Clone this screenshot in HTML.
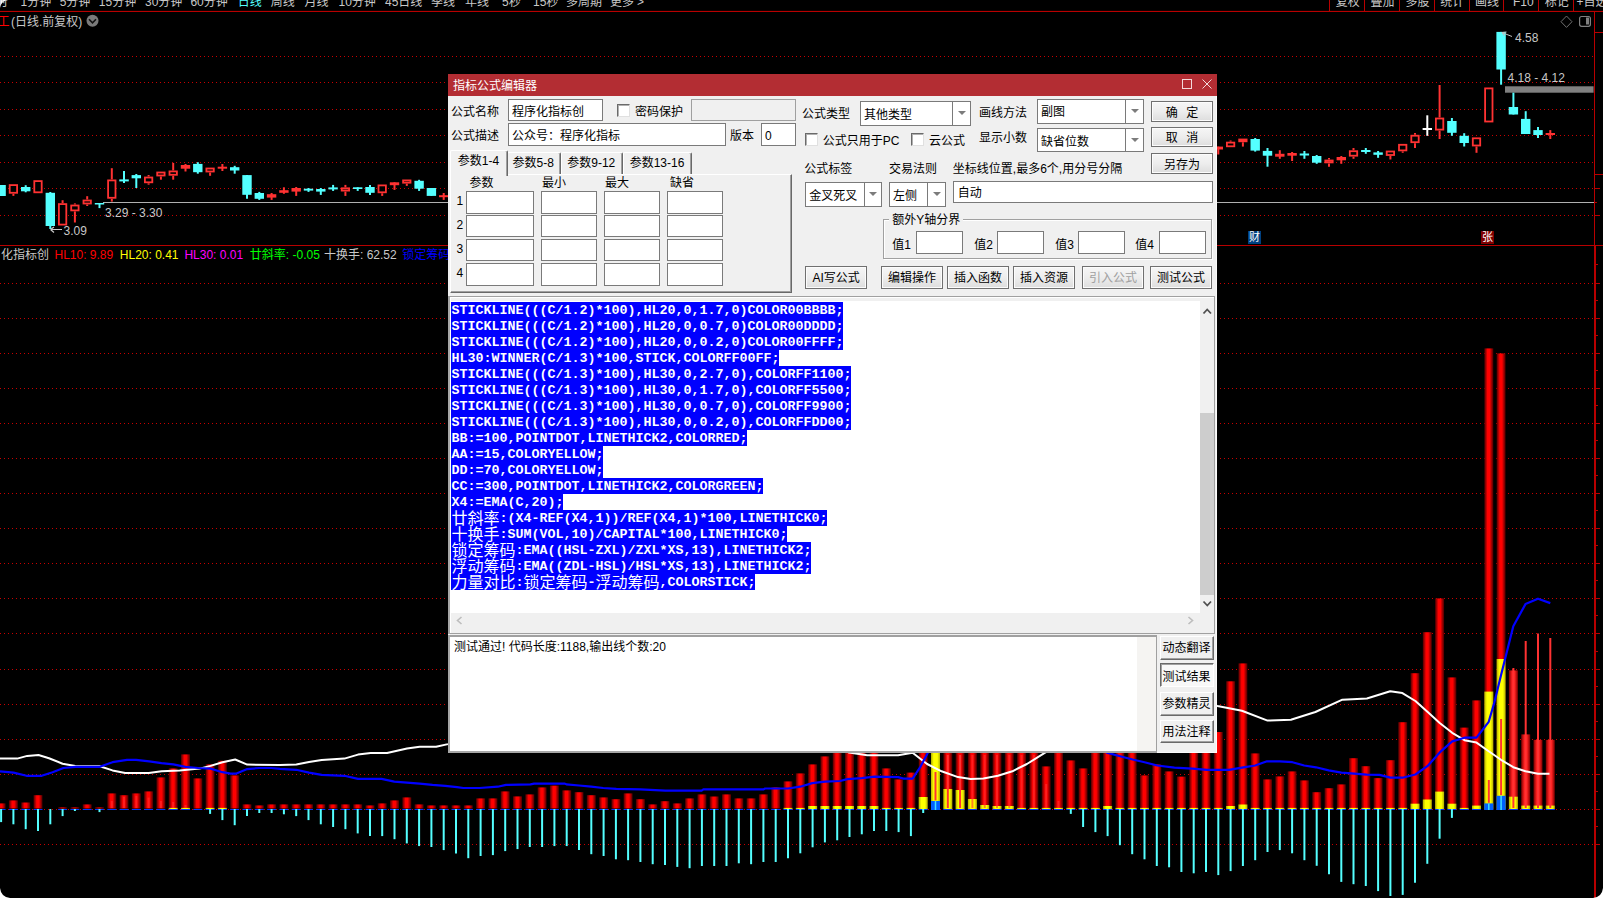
<!DOCTYPE html>
<html lang="zh"><head><meta charset="utf-8"><title>指标公式编辑器</title>
<style>
html,body{margin:0;padding:0;background:#000;}
body{width:1603px;height:898px;overflow:hidden;position:relative;font-family:"Liberation Sans","Noto Sans CJK SC",sans-serif;font-size:12px;color:#000;}
.t{position:absolute;white-space:nowrap;line-height:16px;height:16px;}
.ct{color:#c8c8c8;}
.b{position:absolute;box-sizing:border-box;}
.inp{position:absolute;box-sizing:border-box;background:#fff;border:1px solid #7a7a7a;}
.btn{position:absolute;box-sizing:border-box;border:1px solid #707070;background:linear-gradient(#f6f6f6 0%,#ededed 50%,#dddddd 100%);box-shadow:inset 0 0 0 1px #fcfcfc;}
.bt{position:absolute;white-space:nowrap;line-height:16px;height:16px;text-align:center;}
.cb{position:absolute;box-sizing:border-box;width:13px;height:13px;background:#fff;border:1px solid #6a6a6a;border-right-color:#e0e0e0;border-bottom-color:#e0e0e0;box-shadow:inset 1px 1px 0 #b0b0b0;}
.combo{position:absolute;box-sizing:border-box;background:#fff;border:1px solid #7a7a7a;}
.combo i{position:absolute;top:0;bottom:0;width:1px;background:#7a7a7a;}
.combo b{position:absolute;width:0;height:0;border-left:4px solid transparent;border-right:4px solid transparent;border-top:4px solid #7c7c7c;}
.code{position:absolute;left:451.5px;top:302px;font-family:"Liberation Mono","Noto Sans CJK SC",monospace;font-weight:bold;font-size:13.33px;line-height:16px;color:#fff;}
.code div{height:16px;white-space:pre;overflow:visible;}
.code span{display:inline-block;height:16px;line-height:18px;overflow:hidden;background:#0000ff;padding-left:1px;margin-left:-1px;vertical-align:top;}
.code u{text-decoration:none;font-weight:normal;font-size:16px;text-align:center;display:inline-block;width:16px;height:16px;line-height:16px;vertical-align:top;position:relative;top:-1.5px;font-family:"Noto Sans CJK SC",sans-serif;}
</style></head><body>
<svg width="1603" height="898" viewBox="0 0 1603 898" style="position:absolute;left:0;top:0">
<defs>
<linearGradient id="rg" x1="0" x2="1" y1="0" y2="0"><stop offset="0" stop-color="#480000"/><stop offset="0.36" stop-color="#ff0000"/><stop offset="0.6" stop-color="#ff0000"/><stop offset="1" stop-color="#480000"/></linearGradient>
<linearGradient id="rg2" x1="0" x2="1" y1="0" y2="0"><stop offset="0" stop-color="#7a0000"/><stop offset="0.35" stop-color="#ff2020"/><stop offset="0.65" stop-color="#ff2020"/><stop offset="1" stop-color="#7a0000"/></linearGradient>
<linearGradient id="yg" x1="0" x2="1" y1="0" y2="0"><stop offset="0" stop-color="#b0b000"/><stop offset="0.3" stop-color="#ffff00"/><stop offset="0.7" stop-color="#ffff00"/><stop offset="1" stop-color="#b0b000"/></linearGradient>
</defs>
<line x1="0" y1="56.5" x2="1593" y2="56.5" stroke="#c80000" stroke-width="1" stroke-dasharray="1 3" shape-rendering="crispEdges"/>
<line x1="0" y1="82.5" x2="1593" y2="82.5" stroke="#c80000" stroke-width="1" stroke-dasharray="1 3" shape-rendering="crispEdges"/>
<line x1="0" y1="109.5" x2="1593" y2="109.5" stroke="#c80000" stroke-width="1" stroke-dasharray="1 3" shape-rendering="crispEdges"/>
<line x1="0" y1="135.5" x2="1593" y2="135.5" stroke="#c80000" stroke-width="1" stroke-dasharray="1 3" shape-rendering="crispEdges"/>
<line x1="0" y1="162.5" x2="1593" y2="162.5" stroke="#c80000" stroke-width="1" stroke-dasharray="1 3" shape-rendering="crispEdges"/>
<line x1="0" y1="188.5" x2="1593" y2="188.5" stroke="#c80000" stroke-width="1" stroke-dasharray="1 3" shape-rendering="crispEdges"/>
<line x1="0" y1="215.5" x2="1593" y2="215.5" stroke="#c80000" stroke-width="1" stroke-dasharray="1 3" shape-rendering="crispEdges"/>
<line x1="0" y1="844.5" x2="1593" y2="844.5" stroke="#c80000" stroke-width="1" stroke-dasharray="1 3" shape-rendering="crispEdges"/>
<line x1="0" y1="809.5" x2="1593" y2="809.5" stroke="#c80000" stroke-width="1" stroke-dasharray="1 3" shape-rendering="crispEdges"/>
<line x1="0" y1="774.5" x2="1593" y2="774.5" stroke="#c80000" stroke-width="1" stroke-dasharray="1 3" shape-rendering="crispEdges"/>
<line x1="0" y1="739.5" x2="1593" y2="739.5" stroke="#c80000" stroke-width="1" stroke-dasharray="1 3" shape-rendering="crispEdges"/>
<line x1="0" y1="704.5" x2="1593" y2="704.5" stroke="#c80000" stroke-width="1" stroke-dasharray="1 3" shape-rendering="crispEdges"/>
<line x1="0" y1="669.5" x2="1593" y2="669.5" stroke="#c80000" stroke-width="1" stroke-dasharray="1 3" shape-rendering="crispEdges"/>
<line x1="0" y1="633.5" x2="1593" y2="633.5" stroke="#c80000" stroke-width="1" stroke-dasharray="1 3" shape-rendering="crispEdges"/>
<line x1="0" y1="598.5" x2="1593" y2="598.5" stroke="#c80000" stroke-width="1" stroke-dasharray="1 3" shape-rendering="crispEdges"/>
<line x1="0" y1="563.5" x2="1593" y2="563.5" stroke="#c80000" stroke-width="1" stroke-dasharray="1 3" shape-rendering="crispEdges"/>
<line x1="0" y1="528.5" x2="1593" y2="528.5" stroke="#c80000" stroke-width="1" stroke-dasharray="1 3" shape-rendering="crispEdges"/>
<line x1="0" y1="493.5" x2="1593" y2="493.5" stroke="#c80000" stroke-width="1" stroke-dasharray="1 3" shape-rendering="crispEdges"/>
<line x1="0" y1="458.5" x2="1593" y2="458.5" stroke="#c80000" stroke-width="1" stroke-dasharray="1 3" shape-rendering="crispEdges"/>
<line x1="0" y1="423.5" x2="1593" y2="423.5" stroke="#c80000" stroke-width="1" stroke-dasharray="1 3" shape-rendering="crispEdges"/>
<line x1="0" y1="388.5" x2="1593" y2="388.5" stroke="#c80000" stroke-width="1" stroke-dasharray="1 3" shape-rendering="crispEdges"/>
<line x1="0" y1="353.5" x2="1593" y2="353.5" stroke="#c80000" stroke-width="1" stroke-dasharray="1 3" shape-rendering="crispEdges"/>
<line x1="0" y1="318.5" x2="1593" y2="318.5" stroke="#c80000" stroke-width="1" stroke-dasharray="1 3" shape-rendering="crispEdges"/>
<line x1="0" y1="283.5" x2="1593" y2="283.5" stroke="#c80000" stroke-width="1" stroke-dasharray="1 3" shape-rendering="crispEdges"/>
<g stroke="#B80000" stroke-width="1" shape-rendering="crispEdges">
<rect x="0" y="10.9" width="1603" height="1.1" fill="#B80000" stroke="none" shape-rendering="auto"/>
<line x1="0" y1="245.5" x2="1603" y2="245.5"/>
<line x1="1594.5" y1="11" x2="1594.5" y2="245"/>
<rect x="1594" y="245" width="2" height="653" fill="#B80000" stroke="none"/>
<line x1="1329.5" y1="0" x2="1329.5" y2="11"/>
<line x1="1364.5" y1="0" x2="1364.5" y2="11"/>
<line x1="1399.5" y1="0" x2="1399.5" y2="11"/>
<line x1="1434.5" y1="0" x2="1434.5" y2="11"/>
<line x1="1469.5" y1="0" x2="1469.5" y2="11"/>
<line x1="1503.5" y1="0" x2="1503.5" y2="11"/>
<line x1="1538.5" y1="0" x2="1538.5" y2="11"/>
<line x1="1573.5" y1="0" x2="1573.5" y2="11"/>
<line x1="1594" y1="32.5" x2="1603" y2="32.5"/>
<line x1="1594" y1="174.5" x2="1603" y2="174.5"/>
<line x1="1594" y1="188.5" x2="1600" y2="188.5"/>
<line x1="1594" y1="215.5" x2="1600" y2="215.5"/>
<line x1="1594" y1="202.5" x2="1597" y2="202.5"/>
<line x1="1594" y1="844.5" x2="1600" y2="844.5"/>
<line x1="1594" y1="826.5" x2="1598" y2="826.5"/>
<line x1="1594" y1="809.5" x2="1600" y2="809.5"/>
<line x1="1594" y1="791.5" x2="1598" y2="791.5"/>
<line x1="1594" y1="774.5" x2="1600" y2="774.5"/>
<line x1="1594" y1="756.5" x2="1598" y2="756.5"/>
<line x1="1594" y1="739.5" x2="1600" y2="739.5"/>
<line x1="1594" y1="721.5" x2="1598" y2="721.5"/>
<line x1="1594" y1="704.5" x2="1600" y2="704.5"/>
<line x1="1594" y1="686.5" x2="1598" y2="686.5"/>
<line x1="1594" y1="669.5" x2="1600" y2="669.5"/>
<line x1="1594" y1="651.5" x2="1598" y2="651.5"/>
<line x1="1594" y1="633.5" x2="1600" y2="633.5"/>
<line x1="1594" y1="615.5" x2="1598" y2="615.5"/>
<line x1="1594" y1="598.5" x2="1600" y2="598.5"/>
<line x1="1594" y1="580.5" x2="1598" y2="580.5"/>
<line x1="1594" y1="563.5" x2="1600" y2="563.5"/>
<line x1="1594" y1="545.5" x2="1598" y2="545.5"/>
<line x1="1594" y1="528.5" x2="1600" y2="528.5"/>
<line x1="1594" y1="510.5" x2="1598" y2="510.5"/>
<line x1="1594" y1="493.5" x2="1600" y2="493.5"/>
<line x1="1594" y1="475.5" x2="1598" y2="475.5"/>
<line x1="1594" y1="458.5" x2="1600" y2="458.5"/>
<line x1="1594" y1="440.5" x2="1598" y2="440.5"/>
<line x1="1594" y1="423.5" x2="1600" y2="423.5"/>
<line x1="1594" y1="405.5" x2="1598" y2="405.5"/>
<line x1="1594" y1="388.5" x2="1600" y2="388.5"/>
<line x1="1594" y1="370.5" x2="1598" y2="370.5"/>
<line x1="1594" y1="353.5" x2="1600" y2="353.5"/>
<line x1="1594" y1="335.5" x2="1598" y2="335.5"/>
<line x1="1594" y1="318.5" x2="1600" y2="318.5"/>
<line x1="1594" y1="300.5" x2="1598" y2="300.5"/>
<line x1="1594" y1="283.5" x2="1600" y2="283.5"/>
<line x1="1594" y1="264.5" x2="1598" y2="264.5"/>
</g>
<line x1="103" y1="202.5" x2="1594" y2="202.5" stroke="#b0b0b0" stroke-width="1" shape-rendering="crispEdges"/>
<rect x="1505" y="86.3" width="88.6" height="6.4" fill="#808080"/>
<line x1="1.1" y1="185" x2="1.1" y2="196" stroke="#54ffff" stroke-width="2"/>
<rect x="-3.6" y="185" width="9.4" height="11.0" fill="#54ffff"/>
<line x1="13.4" y1="193.8" x2="13.4" y2="195.9" stroke="#ff3232" stroke-width="2"/>
<rect x="9.7" y="185.1" width="7.4" height="7.7" fill="#000" stroke="#ff3232" stroke-width="1.8"/>
<line x1="25.7" y1="185.2" x2="25.7" y2="192.3" stroke="#54ffff" stroke-width="2"/>
<rect x="21.0" y="187" width="9.4" height="4.3" fill="#54ffff"/>
<rect x="34.3" y="181.1" width="7.4" height="11.2" fill="#000" stroke="#ff3232" stroke-width="1.8"/>
<line x1="50.3" y1="192" x2="50.3" y2="229" stroke="#54ffff" stroke-width="2"/>
<rect x="45.6" y="192.8" width="9.4" height="33.2" fill="#54ffff"/>
<line x1="62.6" y1="200.2" x2="62.6" y2="203.1" stroke="#ff3232" stroke-width="2"/>
<rect x="58.9" y="204.1" width="7.4" height="20.5" fill="#000" stroke="#ff3232" stroke-width="1.8"/>
<line x1="74.9" y1="203.4" x2="74.9" y2="204.5" stroke="#ff3232" stroke-width="2"/>
<line x1="74.9" y1="211.4" x2="74.9" y2="222.5" stroke="#ff3232" stroke-width="2"/>
<rect x="71.2" y="205.5" width="7.4" height="4.9" fill="#000" stroke="#ff3232" stroke-width="1.8"/>
<line x1="87.2" y1="196.2" x2="87.2" y2="199.5" stroke="#ff3232" stroke-width="2"/>
<line x1="87.2" y1="204.5" x2="87.2" y2="206" stroke="#ff3232" stroke-width="2"/>
<rect x="83.5" y="200.5" width="7.4" height="3.0" fill="#000" stroke="#ff3232" stroke-width="1.8"/>
<line x1="99.5" y1="203" x2="99.5" y2="208.1" stroke="#54ffff" stroke-width="2"/>
<rect x="94.8" y="203" width="9.4" height="1.5" fill="#54ffff"/>
<line x1="111.8" y1="168.2" x2="111.8" y2="179.4" stroke="#ff3232" stroke-width="2"/>
<line x1="111.8" y1="198.8" x2="111.8" y2="201.6" stroke="#ff3232" stroke-width="2"/>
<rect x="108.1" y="180.4" width="7.4" height="17.4" fill="#000" stroke="#ff3232" stroke-width="1.8"/>
<line x1="124.0" y1="171.1" x2="124.0" y2="183" stroke="#54ffff" stroke-width="2"/>
<line x1="119.3" y1="180.4" x2="128.8" y2="180.4" stroke="#54ffff" stroke-width="2"/>
<line x1="136.3" y1="174" x2="136.3" y2="188" stroke="#54ffff" stroke-width="2"/>
<rect x="131.6" y="175.1" width="9.4" height="3.2" fill="#54ffff"/>
<line x1="148.6" y1="175" x2="148.6" y2="176.5" stroke="#ff3232" stroke-width="2"/>
<line x1="148.6" y1="183.3" x2="148.6" y2="184.7" stroke="#ff3232" stroke-width="2"/>
<rect x="144.9" y="177.5" width="7.4" height="4.8" fill="#000" stroke="#ff3232" stroke-width="1.8"/>
<line x1="160.9" y1="176.5" x2="160.9" y2="179.7" stroke="#ff3232" stroke-width="2"/>
<rect x="157.2" y="172.5" width="7.4" height="3.0" fill="#000" stroke="#ff3232" stroke-width="1.8"/>
<line x1="173.2" y1="162.9" x2="173.2" y2="170.4" stroke="#ff3232" stroke-width="2"/>
<line x1="173.2" y1="175.8" x2="173.2" y2="179.7" stroke="#ff3232" stroke-width="2"/>
<rect x="169.5" y="171.4" width="7.4" height="3.4" fill="#000" stroke="#ff3232" stroke-width="1.8"/>
<line x1="185.5" y1="164" x2="185.5" y2="171.5" stroke="#ff3232" stroke-width="2"/>
<rect x="180.8" y="165" width="9.4" height="3.7" fill="#ff3232"/>
<line x1="197.8" y1="162.2" x2="197.8" y2="173.7" stroke="#54ffff" stroke-width="2"/>
<rect x="193.1" y="163.9" width="9.4" height="8.3" fill="#54ffff"/>
<line x1="210.1" y1="172.5" x2="210.1" y2="175.8" stroke="#ff3232" stroke-width="2"/>
<rect x="206.4" y="168.5" width="7.4" height="3.0" fill="#000" stroke="#ff3232" stroke-width="1.8"/>
<line x1="222.4" y1="164" x2="222.4" y2="171" stroke="#ff3232" stroke-width="2"/>
<line x1="217.7" y1="167.7" x2="227.1" y2="167.7" stroke="#ff3232" stroke-width="2"/>
<line x1="234.7" y1="165.8" x2="234.7" y2="173.7" stroke="#54ffff" stroke-width="2"/>
<rect x="230.0" y="167.2" width="9.4" height="3.3" fill="#54ffff"/>
<line x1="247.0" y1="175.1" x2="247.0" y2="198.8" stroke="#54ffff" stroke-width="2"/>
<rect x="242.3" y="175.1" width="9.4" height="19.7" fill="#54ffff"/>
<line x1="259.3" y1="191.9" x2="259.3" y2="199.9" stroke="#54ffff" stroke-width="2"/>
<rect x="254.6" y="193" width="9.4" height="5.8" fill="#54ffff"/>
<line x1="271.6" y1="193" x2="271.6" y2="199.9" stroke="#ff3232" stroke-width="2"/>
<rect x="266.9" y="194.2" width="9.4" height="3.4" fill="#ff3232"/>
<line x1="283.9" y1="187.3" x2="283.9" y2="193.8" stroke="#ff3232" stroke-width="2"/>
<rect x="279.2" y="190.2" width="9.4" height="2.6" fill="#ff3232"/>
<line x1="296.2" y1="187" x2="296.2" y2="195.9" stroke="#ff3232" stroke-width="2"/>
<rect x="291.5" y="188" width="9.4" height="3.6" fill="#ff3232"/>
<line x1="308.5" y1="188" x2="308.5" y2="191.9" stroke="#54ffff" stroke-width="2"/>
<rect x="303.8" y="188.7" width="9.4" height="1.9" fill="#54ffff"/>
<line x1="320.8" y1="188" x2="320.8" y2="194.9" stroke="#54ffff" stroke-width="2"/>
<rect x="316.1" y="189" width="9.4" height="2.6" fill="#54ffff"/>
<line x1="333.1" y1="184.9" x2="333.1" y2="190.9" stroke="#54ffff" stroke-width="2"/>
<line x1="328.4" y1="188.4" x2="337.8" y2="188.4" stroke="#54ffff" stroke-width="2"/>
<line x1="345.4" y1="184.9" x2="345.4" y2="187.3" stroke="#ff3232" stroke-width="2"/>
<line x1="345.4" y1="191.6" x2="345.4" y2="195.9" stroke="#ff3232" stroke-width="2"/>
<rect x="341.7" y="188.3" width="7.4" height="2.3" fill="#000" stroke="#ff3232" stroke-width="1.8"/>
<line x1="357.7" y1="187.3" x2="357.7" y2="190.9" stroke="#54ffff" stroke-width="2"/>
<rect x="353.0" y="187.3" width="9.4" height="1.7" fill="#54ffff"/>
<line x1="370.0" y1="184.9" x2="370.0" y2="194.9" stroke="#54ffff" stroke-width="2"/>
<rect x="365.3" y="187" width="9.4" height="5.8" fill="#54ffff"/>
<line x1="382.2" y1="193.3" x2="382.2" y2="195.9" stroke="#ff3232" stroke-width="2"/>
<rect x="378.5" y="185.4" width="7.4" height="6.9" fill="#000" stroke="#ff3232" stroke-width="1.8"/>
<line x1="394.5" y1="182.3" x2="394.5" y2="189.9" stroke="#ff3232" stroke-width="2"/>
<rect x="389.8" y="182.3" width="9.4" height="2.9" fill="#ff3232"/>
<line x1="406.8" y1="183.7" x2="406.8" y2="185.9" stroke="#ff3232" stroke-width="2"/>
<rect x="403.1" y="180.4" width="7.4" height="2.3" fill="#000" stroke="#ff3232" stroke-width="1.8"/>
<line x1="419.1" y1="179.8" x2="419.1" y2="190.9" stroke="#54ffff" stroke-width="2"/>
<rect x="414.4" y="180.8" width="9.4" height="7.9" fill="#54ffff"/>
<line x1="431.4" y1="188" x2="431.4" y2="195.9" stroke="#54ffff" stroke-width="2"/>
<rect x="426.7" y="188" width="9.4" height="7.9" fill="#54ffff"/>
<line x1="443.7" y1="193" x2="443.7" y2="199.9" stroke="#ff3232" stroke-width="2"/>
<line x1="439.0" y1="196.2" x2="448.4" y2="196.2" stroke="#ff3232" stroke-width="2"/>
<line x1="1218.3" y1="146.6" x2="1218.3" y2="154.5" stroke="#ff3232" stroke-width="2"/>
<rect x="1213.6" y="146.6" width="9.4" height="2.9" fill="#ff3232"/>
<line x1="1230.6" y1="140.5" x2="1230.6" y2="141.6" stroke="#ff3232" stroke-width="2"/>
<rect x="1226.9" y="142.6" width="7.4" height="3.7" fill="#000" stroke="#ff3232" stroke-width="1.8"/>
<line x1="1242.9" y1="142.3" x2="1242.9" y2="146.6" stroke="#ff3232" stroke-width="2"/>
<rect x="1239.2" y="139.5" width="7.4" height="1.8" fill="#000" stroke="#ff3232" stroke-width="1.8"/>
<line x1="1255.2" y1="138" x2="1255.2" y2="151.6" stroke="#54ffff" stroke-width="2"/>
<rect x="1250.5" y="139" width="9.4" height="11.6" fill="#54ffff"/>
<line x1="1267.5" y1="148" x2="1267.5" y2="166.7" stroke="#54ffff" stroke-width="2"/>
<rect x="1262.8" y="150.9" width="9.4" height="4.8" fill="#54ffff"/>
<line x1="1279.8" y1="150.2" x2="1279.8" y2="158.8" stroke="#ff3232" stroke-width="2"/>
<rect x="1275.1" y="153.8" width="9.4" height="2.9" fill="#ff3232"/>
<line x1="1292.1" y1="152" x2="1292.1" y2="161" stroke="#ff3232" stroke-width="2"/>
<rect x="1287.4" y="153" width="9.4" height="2.7" fill="#ff3232"/>
<line x1="1304.4" y1="151" x2="1304.4" y2="158.8" stroke="#54ffff" stroke-width="2"/>
<line x1="1299.7" y1="154.5" x2="1309.1" y2="154.5" stroke="#54ffff" stroke-width="2"/>
<line x1="1316.7" y1="155" x2="1316.7" y2="163.8" stroke="#54ffff" stroke-width="2"/>
<rect x="1312.0" y="156" width="9.4" height="6.7" fill="#54ffff"/>
<line x1="1329.0" y1="158" x2="1329.0" y2="159.5" stroke="#ff3232" stroke-width="2"/>
<line x1="1329.0" y1="163.4" x2="1329.0" y2="166.7" stroke="#ff3232" stroke-width="2"/>
<rect x="1325.3" y="160.5" width="7.4" height="1.9" fill="#000" stroke="#ff3232" stroke-width="1.8"/>
<line x1="1341.3" y1="156" x2="1341.3" y2="163.8" stroke="#ff3232" stroke-width="2"/>
<rect x="1336.6" y="157" width="9.4" height="3.3" fill="#ff3232"/>
<line x1="1353.5" y1="148" x2="1353.5" y2="150.2" stroke="#ff3232" stroke-width="2"/>
<line x1="1353.5" y1="156.7" x2="1353.5" y2="158.8" stroke="#ff3232" stroke-width="2"/>
<rect x="1349.8" y="151.2" width="7.4" height="4.5" fill="#000" stroke="#ff3232" stroke-width="1.8"/>
<line x1="1365.8" y1="148" x2="1365.8" y2="153.8" stroke="#54ffff" stroke-width="2"/>
<line x1="1361.1" y1="151" x2="1370.5" y2="151" stroke="#54ffff" stroke-width="2"/>
<line x1="1378.1" y1="151" x2="1378.1" y2="157.8" stroke="#54ffff" stroke-width="2"/>
<rect x="1373.4" y="152.4" width="9.4" height="2.4" fill="#54ffff"/>
<line x1="1390.4" y1="156" x2="1390.4" y2="159.5" stroke="#ff3232" stroke-width="2"/>
<rect x="1386.7" y="151.5" width="7.4" height="3.5" fill="#000" stroke="#ff3232" stroke-width="1.8"/>
<line x1="1402.7" y1="151.4" x2="1402.7" y2="152.8" stroke="#ff3232" stroke-width="2"/>
<rect x="1399.0" y="144.8" width="7.4" height="5.6" fill="#000" stroke="#ff3232" stroke-width="1.8"/>
<line x1="1415.0" y1="133.1" x2="1415.0" y2="134.7" stroke="#ff3232" stroke-width="2"/>
<line x1="1415.0" y1="143.2" x2="1415.0" y2="148" stroke="#ff3232" stroke-width="2"/>
<rect x="1411.3" y="135.7" width="7.4" height="6.5" fill="#000" stroke="#ff3232" stroke-width="1.8"/>
<line x1="1427.3" y1="115.3" x2="1427.3" y2="135.8" stroke="#ffffff" stroke-width="2"/>
<line x1="1422.6" y1="129" x2="1432.0" y2="129" stroke="#ffffff" stroke-width="2"/>
<line x1="1439.6" y1="85" x2="1439.6" y2="117.5" stroke="#ff3232" stroke-width="2"/>
<line x1="1439.6" y1="130.6" x2="1439.6" y2="139" stroke="#ff3232" stroke-width="2"/>
<rect x="1435.9" y="118.5" width="7.4" height="11.1" fill="#000" stroke="#ff3232" stroke-width="1.8"/>
<line x1="1451.9" y1="118" x2="1451.9" y2="135.8" stroke="#54ffff" stroke-width="2"/>
<rect x="1447.2" y="121" width="9.4" height="11.8" fill="#54ffff"/>
<line x1="1464.2" y1="133.2" x2="1464.2" y2="146.5" stroke="#54ffff" stroke-width="2"/>
<rect x="1459.5" y="135.8" width="9.4" height="7.2" fill="#54ffff"/>
<line x1="1476.5" y1="146.5" x2="1476.5" y2="152.8" stroke="#ff3232" stroke-width="2"/>
<rect x="1472.8" y="138.3" width="7.4" height="7.2" fill="#000" stroke="#ff3232" stroke-width="1.8"/>
<rect x="1485.1" y="88.4" width="7.4" height="33.1" fill="#000" stroke="#ff3232" stroke-width="1.8"/>
<line x1="1501.1" y1="31.9" x2="1501.1" y2="84.7" stroke="#54ffff" stroke-width="2"/>
<rect x="1496.4" y="31.9" width="9.4" height="37.6" fill="#54ffff"/>
<line x1="1513.4" y1="92.7" x2="1513.4" y2="114.5" stroke="#54ffff" stroke-width="2"/>
<rect x="1508.7" y="107" width="9.4" height="7.5" fill="#54ffff"/>
<line x1="1525.7" y1="111.2" x2="1525.7" y2="134" stroke="#54ffff" stroke-width="2"/>
<rect x="1521.0" y="118.9" width="9.4" height="15.1" fill="#54ffff"/>
<line x1="1538.0" y1="127" x2="1538.0" y2="138" stroke="#54ffff" stroke-width="2"/>
<rect x="1533.3" y="130.1" width="9.4" height="4.9" fill="#54ffff"/>
<line x1="1550.3" y1="130.1" x2="1550.3" y2="139" stroke="#ff3232" stroke-width="2"/>
<line x1="1545.6" y1="134" x2="1555.0" y2="134" stroke="#ff3232" stroke-width="2"/>
<rect x="-3.4" y="803.4" width="9" height="5.1" fill="url(#rg)"/>
<rect x="-3.4" y="809" width="9" height="1" fill="#0038ff"/>
<line x1="1.1" y1="809" x2="1.1" y2="822.1" stroke="#54ffff" stroke-width="2"/>
<rect x="8.9" y="800.4" width="9" height="8.1" fill="url(#rg)"/>
<rect x="8.9" y="809" width="9" height="1" fill="#0038ff"/>
<line x1="13.4" y1="809" x2="13.4" y2="824.3" stroke="#54ffff" stroke-width="2"/>
<rect x="21.2" y="802.5" width="9" height="6.0" fill="url(#rg)"/>
<rect x="21.2" y="809" width="9" height="1" fill="#0038ff"/>
<line x1="25.7" y1="809" x2="25.7" y2="829.2" stroke="#54ffff" stroke-width="2"/>
<rect x="33.5" y="795.2" width="9" height="13.3" fill="url(#rg)"/>
<rect x="33.5" y="809" width="9" height="1" fill="#0038ff"/>
<line x1="38.0" y1="809" x2="38.0" y2="831.0" stroke="#54ffff" stroke-width="2"/>
<line x1="50.3" y1="809" x2="50.3" y2="824.3" stroke="#54ffff" stroke-width="2"/>
<rect x="58.1" y="807.4" width="9" height="1.1" fill="url(#rg)"/>
<rect x="58.1" y="809" width="9" height="1" fill="#0038ff"/>
<line x1="62.6" y1="809" x2="62.6" y2="816.1" stroke="#54ffff" stroke-width="2"/>
<rect x="70.4" y="807.4" width="9" height="1.1" fill="url(#rg)"/>
<rect x="70.4" y="809" width="9" height="1" fill="#0038ff"/>
<line x1="74.9" y1="809" x2="74.9" y2="811.0" stroke="#54ffff" stroke-width="2"/>
<rect x="82.7" y="804.4" width="9" height="4.1" fill="url(#rg)"/>
<rect x="82.7" y="809" width="9" height="1" fill="#0038ff"/>
<rect x="95.0" y="807.4" width="9" height="1.1" fill="url(#rg)"/>
<rect x="95.0" y="809" width="9" height="1" fill="#0038ff"/>
<line x1="99.5" y1="809" x2="99.5" y2="812.1" stroke="#54ffff" stroke-width="2"/>
<rect x="107.3" y="793.4" width="9" height="15.1" fill="url(#rg)"/>
<rect x="107.3" y="809" width="9" height="1" fill="#0038ff"/>
<rect x="119.5" y="795.2" width="9" height="13.3" fill="url(#rg)"/>
<rect x="119.5" y="809" width="9" height="1" fill="#0038ff"/>
<rect x="131.8" y="793.4" width="9" height="15.1" fill="url(#rg)"/>
<rect x="131.8" y="809" width="9" height="1" fill="#0038ff"/>
<rect x="144.1" y="791.4" width="9" height="17.1" fill="url(#rg)"/>
<rect x="144.1" y="809" width="9" height="1" fill="#0038ff"/>
<rect x="156.4" y="777.4" width="9" height="31.1" fill="url(#rg)"/>
<rect x="156.4" y="809" width="9" height="1" fill="#0038ff"/>
<rect x="168.7" y="768.4" width="9" height="40.1" fill="url(#rg)"/>
<rect x="168.7" y="807.9" width="9" height="1.1" fill="url(#yg)"/>
<rect x="168.7" y="809" width="9" height="1" fill="#0038ff"/>
<rect x="181.0" y="754.4" width="9" height="54.1" fill="url(#rg)"/>
<rect x="181.0" y="807.9" width="9" height="1.1" fill="url(#yg)"/>
<rect x="181.0" y="809" width="9" height="1" fill="#0038ff"/>
<rect x="193.3" y="778.4" width="9" height="30.1" fill="url(#rg)"/>
<rect x="193.3" y="809" width="9" height="1" fill="#0038ff"/>
<rect x="205.6" y="764.4" width="9" height="44.1" fill="url(#rg)"/>
<rect x="205.6" y="807.9" width="9" height="1.1" fill="url(#yg)"/>
<rect x="205.6" y="809" width="9" height="1" fill="#0038ff"/>
<line x1="210.1" y1="809" x2="210.1" y2="813.9" stroke="#54ffff" stroke-width="2"/>
<rect x="217.9" y="760.8" width="9" height="47.7" fill="url(#rg)"/>
<rect x="217.9" y="807.9" width="9" height="1.1" fill="url(#yg)"/>
<rect x="217.9" y="809" width="9" height="1" fill="#0038ff"/>
<line x1="222.4" y1="809" x2="222.4" y2="820.1" stroke="#54ffff" stroke-width="2"/>
<rect x="230.2" y="775.4" width="9" height="33.1" fill="url(#rg)"/>
<rect x="230.2" y="809" width="9" height="1" fill="#0038ff"/>
<line x1="234.7" y1="809" x2="234.7" y2="825.2" stroke="#54ffff" stroke-width="2"/>
<rect x="242.5" y="804.4" width="9" height="4.1" fill="url(#rg)"/>
<rect x="242.5" y="809" width="9" height="1" fill="#0038ff"/>
<line x1="247.0" y1="809" x2="247.0" y2="816.1" stroke="#54ffff" stroke-width="2"/>
<rect x="254.8" y="805.4" width="9" height="3.1" fill="url(#rg)"/>
<rect x="254.8" y="809" width="9" height="1" fill="#0038ff"/>
<line x1="259.3" y1="809" x2="259.3" y2="813.0" stroke="#54ffff" stroke-width="2"/>
<rect x="267.1" y="804.4" width="9" height="4.1" fill="url(#rg)"/>
<rect x="267.1" y="809" width="9" height="1" fill="#0038ff"/>
<line x1="271.6" y1="809" x2="271.6" y2="813.0" stroke="#54ffff" stroke-width="2"/>
<rect x="279.4" y="804.4" width="9" height="4.1" fill="url(#rg)"/>
<rect x="279.4" y="809" width="9" height="1" fill="#0038ff"/>
<line x1="283.9" y1="809" x2="283.9" y2="814.3" stroke="#54ffff" stroke-width="2"/>
<rect x="291.7" y="804.4" width="9" height="4.1" fill="url(#rg)"/>
<rect x="291.7" y="809" width="9" height="1" fill="#0038ff"/>
<line x1="296.2" y1="809" x2="296.2" y2="816.1" stroke="#54ffff" stroke-width="2"/>
<rect x="304.0" y="804.4" width="9" height="4.1" fill="url(#rg)"/>
<rect x="304.0" y="809" width="9" height="1" fill="#0038ff"/>
<line x1="308.5" y1="809" x2="308.5" y2="820.1" stroke="#54ffff" stroke-width="2"/>
<rect x="316.3" y="804.4" width="9" height="4.1" fill="url(#rg)"/>
<rect x="316.3" y="809" width="9" height="1" fill="#0038ff"/>
<line x1="320.8" y1="809" x2="320.8" y2="824.3" stroke="#54ffff" stroke-width="2"/>
<rect x="328.6" y="804.4" width="9" height="4.1" fill="url(#rg)"/>
<rect x="328.6" y="809" width="9" height="1" fill="#0038ff"/>
<line x1="333.1" y1="809" x2="333.1" y2="827.0" stroke="#54ffff" stroke-width="2"/>
<rect x="340.9" y="804.4" width="9" height="4.1" fill="url(#rg)"/>
<rect x="340.9" y="809" width="9" height="1" fill="#0038ff"/>
<line x1="345.4" y1="809" x2="345.4" y2="829.2" stroke="#54ffff" stroke-width="2"/>
<rect x="353.2" y="804.4" width="9" height="4.1" fill="url(#rg)"/>
<rect x="353.2" y="809" width="9" height="1" fill="#0038ff"/>
<line x1="357.7" y1="809" x2="357.7" y2="833.4" stroke="#54ffff" stroke-width="2"/>
<rect x="365.5" y="805.4" width="9" height="3.1" fill="url(#rg)"/>
<rect x="365.5" y="809" width="9" height="1" fill="#0038ff"/>
<line x1="370.0" y1="809" x2="370.0" y2="836.1" stroke="#54ffff" stroke-width="2"/>
<rect x="377.7" y="803.4" width="9" height="5.1" fill="url(#rg)"/>
<rect x="377.7" y="809" width="9" height="1" fill="#0038ff"/>
<line x1="382.2" y1="809" x2="382.2" y2="836.1" stroke="#54ffff" stroke-width="2"/>
<rect x="390.0" y="800.4" width="9" height="8.1" fill="url(#rg)"/>
<rect x="390.0" y="809" width="9" height="1" fill="#0038ff"/>
<line x1="394.5" y1="809" x2="394.5" y2="839.2" stroke="#54ffff" stroke-width="2"/>
<rect x="402.3" y="797.4" width="9" height="11.1" fill="url(#rg)"/>
<rect x="402.3" y="809" width="9" height="1" fill="#0038ff"/>
<line x1="406.8" y1="809" x2="406.8" y2="843.4" stroke="#54ffff" stroke-width="2"/>
<rect x="414.6" y="804.4" width="9" height="4.1" fill="url(#rg)"/>
<rect x="414.6" y="809" width="9" height="1" fill="#0038ff"/>
<line x1="419.1" y1="809" x2="419.1" y2="846.1" stroke="#54ffff" stroke-width="2"/>
<rect x="426.9" y="805.4" width="9" height="3.1" fill="url(#rg)"/>
<rect x="426.9" y="809" width="9" height="1" fill="#0038ff"/>
<line x1="431.4" y1="809" x2="431.4" y2="847.0" stroke="#54ffff" stroke-width="2"/>
<rect x="439.2" y="805.4" width="9" height="3.1" fill="url(#rg)"/>
<rect x="439.2" y="809" width="9" height="1" fill="#0038ff"/>
<line x1="443.7" y1="809" x2="443.7" y2="850.1" stroke="#54ffff" stroke-width="2"/>
<rect x="451.5" y="805.4" width="9" height="3.1" fill="url(#rg)"/>
<rect x="451.5" y="809" width="9" height="1" fill="#0038ff"/>
<line x1="456.0" y1="809" x2="456.0" y2="853.4" stroke="#54ffff" stroke-width="2"/>
<rect x="463.8" y="805.4" width="9" height="3.1" fill="url(#rg)"/>
<rect x="463.8" y="809" width="9" height="1" fill="#0038ff"/>
<line x1="468.3" y1="809" x2="468.3" y2="858.2" stroke="#54ffff" stroke-width="2"/>
<rect x="476.1" y="798.4" width="9" height="10.1" fill="url(#rg)"/>
<rect x="476.1" y="809" width="9" height="1" fill="#0038ff"/>
<line x1="480.6" y1="809" x2="480.6" y2="856.0" stroke="#54ffff" stroke-width="2"/>
<rect x="488.4" y="798.4" width="9" height="10.1" fill="url(#rg)"/>
<rect x="488.4" y="809" width="9" height="1" fill="#0038ff"/>
<line x1="492.9" y1="809" x2="492.9" y2="855.1" stroke="#54ffff" stroke-width="2"/>
<rect x="500.7" y="791.4" width="9" height="17.1" fill="url(#rg)"/>
<rect x="500.7" y="809" width="9" height="1" fill="#0038ff"/>
<line x1="505.2" y1="809" x2="505.2" y2="851.1" stroke="#54ffff" stroke-width="2"/>
<rect x="513.0" y="796.4" width="9" height="12.1" fill="url(#rg)"/>
<rect x="513.0" y="809" width="9" height="1" fill="#0038ff"/>
<line x1="517.5" y1="809" x2="517.5" y2="849.1" stroke="#54ffff" stroke-width="2"/>
<rect x="525.3" y="794.4" width="9" height="14.1" fill="url(#rg)"/>
<rect x="525.3" y="809" width="9" height="1" fill="#0038ff"/>
<line x1="529.8" y1="809" x2="529.8" y2="847.0" stroke="#54ffff" stroke-width="2"/>
<rect x="537.6" y="787.4" width="9" height="21.1" fill="url(#rg)"/>
<rect x="537.6" y="809" width="9" height="1" fill="#0038ff"/>
<line x1="542.1" y1="809" x2="542.1" y2="847.0" stroke="#54ffff" stroke-width="2"/>
<rect x="549.9" y="785.6" width="9" height="22.9" fill="url(#rg)"/>
<rect x="549.9" y="809" width="9" height="1" fill="#0038ff"/>
<line x1="554.4" y1="809" x2="554.4" y2="846.1" stroke="#54ffff" stroke-width="2"/>
<rect x="562.2" y="790.4" width="9" height="18.1" fill="url(#rg)"/>
<rect x="562.2" y="809" width="9" height="1" fill="#0038ff"/>
<line x1="566.7" y1="809" x2="566.7" y2="846.1" stroke="#54ffff" stroke-width="2"/>
<rect x="574.5" y="792.2" width="9" height="16.3" fill="url(#rg)"/>
<rect x="574.5" y="809" width="9" height="1" fill="#0038ff"/>
<line x1="579.0" y1="809" x2="579.0" y2="850.1" stroke="#54ffff" stroke-width="2"/>
<rect x="586.8" y="795.2" width="9" height="13.3" fill="url(#rg)"/>
<rect x="586.8" y="809" width="9" height="1" fill="#0038ff"/>
<line x1="591.3" y1="809" x2="591.3" y2="854.2" stroke="#54ffff" stroke-width="2"/>
<rect x="599.1" y="797.4" width="9" height="11.1" fill="url(#rg)"/>
<rect x="599.1" y="809" width="9" height="1" fill="#0038ff"/>
<line x1="603.6" y1="809" x2="603.6" y2="856.0" stroke="#54ffff" stroke-width="2"/>
<rect x="611.4" y="799.2" width="9" height="9.3" fill="url(#rg)"/>
<rect x="611.4" y="809" width="9" height="1" fill="#0038ff"/>
<line x1="615.9" y1="809" x2="615.9" y2="859.3" stroke="#54ffff" stroke-width="2"/>
<rect x="623.6" y="793.4" width="9" height="15.1" fill="url(#rg)"/>
<rect x="623.6" y="809" width="9" height="1" fill="#0038ff"/>
<line x1="628.1" y1="809" x2="628.1" y2="860.2" stroke="#54ffff" stroke-width="2"/>
<rect x="635.9" y="799.2" width="9" height="9.3" fill="url(#rg)"/>
<rect x="635.9" y="809" width="9" height="1" fill="#0038ff"/>
<line x1="640.4" y1="809" x2="640.4" y2="862.0" stroke="#54ffff" stroke-width="2"/>
<rect x="648.2" y="804.4" width="9" height="4.1" fill="url(#rg)"/>
<rect x="648.2" y="809" width="9" height="1" fill="#0038ff"/>
<line x1="652.7" y1="809" x2="652.7" y2="864.2" stroke="#54ffff" stroke-width="2"/>
<rect x="660.5" y="801.2" width="9" height="7.3" fill="url(#rg)"/>
<rect x="660.5" y="809" width="9" height="1" fill="#0038ff"/>
<line x1="665.0" y1="809" x2="665.0" y2="865.1" stroke="#54ffff" stroke-width="2"/>
<rect x="672.8" y="803.4" width="9" height="5.1" fill="url(#rg)"/>
<rect x="672.8" y="809" width="9" height="1" fill="#0038ff"/>
<line x1="677.3" y1="809" x2="677.3" y2="866.9" stroke="#54ffff" stroke-width="2"/>
<rect x="685.1" y="798.4" width="9" height="10.1" fill="url(#rg)"/>
<rect x="685.1" y="809" width="9" height="1" fill="#0038ff"/>
<line x1="689.6" y1="809" x2="689.6" y2="868.2" stroke="#54ffff" stroke-width="2"/>
<rect x="697.4" y="794.4" width="9" height="14.1" fill="url(#rg)"/>
<rect x="697.4" y="809" width="9" height="1" fill="#0038ff"/>
<line x1="701.9" y1="809" x2="701.9" y2="866.0" stroke="#54ffff" stroke-width="2"/>
<rect x="709.7" y="796.5" width="9" height="12.0" fill="url(#rg)"/>
<rect x="709.7" y="809" width="9" height="1" fill="#0038ff"/>
<line x1="714.2" y1="809" x2="714.2" y2="866.0" stroke="#54ffff" stroke-width="2"/>
<rect x="722.0" y="794.4" width="9" height="14.1" fill="url(#rg)"/>
<rect x="722.0" y="809" width="9" height="1" fill="#0038ff"/>
<line x1="726.5" y1="809" x2="726.5" y2="866.0" stroke="#54ffff" stroke-width="2"/>
<rect x="734.3" y="798.4" width="9" height="10.1" fill="url(#rg)"/>
<rect x="734.3" y="809" width="9" height="1" fill="#0038ff"/>
<line x1="738.8" y1="809" x2="738.8" y2="863.3" stroke="#54ffff" stroke-width="2"/>
<rect x="746.6" y="798.4" width="9" height="10.1" fill="url(#rg)"/>
<rect x="746.6" y="809" width="9" height="1" fill="#0038ff"/>
<line x1="751.1" y1="809" x2="751.1" y2="864.2" stroke="#54ffff" stroke-width="2"/>
<rect x="758.9" y="794.4" width="9" height="14.1" fill="url(#rg)"/>
<rect x="758.9" y="809" width="9" height="1" fill="#0038ff"/>
<line x1="763.4" y1="809" x2="763.4" y2="862.0" stroke="#54ffff" stroke-width="2"/>
<rect x="771.2" y="787.4" width="9" height="21.1" fill="url(#rg)"/>
<rect x="771.2" y="809" width="9" height="1" fill="#0038ff"/>
<line x1="775.7" y1="809" x2="775.7" y2="862.0" stroke="#54ffff" stroke-width="2"/>
<rect x="783.5" y="781.4" width="9" height="27.1" fill="url(#rg)"/>
<rect x="783.5" y="807.9" width="9" height="1.1" fill="url(#yg)"/>
<rect x="783.5" y="809" width="9" height="1" fill="#0038ff"/>
<line x1="788.0" y1="809" x2="788.0" y2="858.2" stroke="#54ffff" stroke-width="2"/>
<rect x="795.8" y="773.4" width="9" height="35.1" fill="url(#rg)"/>
<rect x="795.8" y="807.9" width="9" height="1.1" fill="url(#yg)"/>
<rect x="795.8" y="809" width="9" height="1" fill="#0038ff"/>
<line x1="800.3" y1="809" x2="800.3" y2="853.3" stroke="#54ffff" stroke-width="2"/>
<rect x="808.1" y="764.4" width="9" height="44.1" fill="url(#rg)"/>
<rect x="808.1" y="806.0" width="9" height="3.0" fill="url(#yg)"/>
<rect x="808.1" y="809" width="9" height="1" fill="#0038ff"/>
<line x1="812.6" y1="809" x2="812.6" y2="847.3" stroke="#54ffff" stroke-width="2"/>
<rect x="820.4" y="756.4" width="9" height="52.1" fill="url(#rg)"/>
<rect x="820.4" y="806.0" width="9" height="3.0" fill="url(#yg)"/>
<rect x="820.4" y="809" width="9" height="1" fill="#0038ff"/>
<line x1="824.9" y1="809" x2="824.9" y2="842.4" stroke="#54ffff" stroke-width="2"/>
<rect x="832.7" y="744.4" width="9" height="64.1" fill="url(#rg)"/>
<rect x="832.7" y="806.0" width="9" height="3.0" fill="url(#yg)"/>
<rect x="832.7" y="809" width="9" height="1" fill="#0038ff"/>
<line x1="837.2" y1="809" x2="837.2" y2="840.3" stroke="#54ffff" stroke-width="2"/>
<rect x="845.0" y="734.4" width="9" height="74.1" fill="url(#rg)"/>
<rect x="845.0" y="806.0" width="9" height="3.0" fill="url(#yg)"/>
<rect x="845.0" y="809" width="9" height="1" fill="#0038ff"/>
<line x1="849.5" y1="809" x2="849.5" y2="837.0" stroke="#54ffff" stroke-width="2"/>
<rect x="857.2" y="729.4" width="9" height="79.1" fill="url(#rg)"/>
<rect x="857.2" y="806.0" width="9" height="3.0" fill="url(#yg)"/>
<rect x="857.2" y="809" width="9" height="1" fill="#0038ff"/>
<line x1="861.8" y1="809" x2="861.8" y2="834.3" stroke="#54ffff" stroke-width="2"/>
<rect x="869.5" y="739.4" width="9" height="69.1" fill="url(#rg)"/>
<rect x="869.5" y="806.0" width="9" height="3.0" fill="url(#yg)"/>
<rect x="869.5" y="809" width="9" height="1" fill="#0038ff"/>
<line x1="874.0" y1="809" x2="874.0" y2="831.0" stroke="#54ffff" stroke-width="2"/>
<rect x="881.8" y="768.4" width="9" height="40.1" fill="url(#rg)"/>
<rect x="881.8" y="807.9" width="9" height="1.1" fill="url(#yg)"/>
<rect x="881.8" y="809" width="9" height="1" fill="#0038ff"/>
<line x1="886.3" y1="809" x2="886.3" y2="831.0" stroke="#54ffff" stroke-width="2"/>
<rect x="894.1" y="779.4" width="9" height="29.1" fill="url(#rg)"/>
<rect x="894.1" y="807.9" width="9" height="1.1" fill="url(#yg)"/>
<rect x="894.1" y="809" width="9" height="1" fill="#0038ff"/>
<line x1="898.6" y1="809" x2="898.6" y2="832.1" stroke="#54ffff" stroke-width="2"/>
<rect x="906.4" y="772.6" width="9" height="35.9" fill="url(#rg)"/>
<rect x="906.4" y="807.9" width="9" height="1.1" fill="url(#yg)"/>
<rect x="906.4" y="809" width="9" height="1" fill="#0038ff"/>
<line x1="910.9" y1="809" x2="910.9" y2="836.1" stroke="#54ffff" stroke-width="2"/>
<rect x="918.7" y="729.4" width="9" height="79.1" fill="url(#rg)"/>
<rect x="918.7" y="797.0" width="9" height="12.0" fill="url(#yg)"/>
<rect x="918.7" y="809" width="9" height="1" fill="#0038ff"/>
<line x1="923.2" y1="809" x2="923.2" y2="813.0" stroke="#54ffff" stroke-width="2"/>
<rect x="931.0" y="729.4" width="9" height="79.1" fill="url(#rg)"/>
<rect x="931.0" y="729.0" width="9" height="80.0" fill="url(#yg)"/>
<rect x="931.0" y="809" width="9" height="1" fill="#0038ff"/>
<rect x="931.0" y="801.0" width="9" height="9.0" fill="#0060ff"/>
<line x1="935.5" y1="801.0" x2="935.5" y2="810" stroke="#40e0ff" stroke-width="1.5"/>
<rect x="943.3" y="729.4" width="9" height="79.1" fill="url(#rg)"/>
<rect x="943.3" y="789.0" width="9" height="20.0" fill="url(#yg)"/>
<rect x="943.3" y="809" width="9" height="1" fill="#0038ff"/>
<rect x="955.6" y="729.4" width="9" height="79.1" fill="url(#rg)"/>
<rect x="955.6" y="790.0" width="9" height="19.0" fill="url(#yg)"/>
<rect x="955.6" y="809" width="9" height="1" fill="#0038ff"/>
<rect x="967.9" y="729.4" width="9" height="79.1" fill="url(#rg)"/>
<rect x="967.9" y="799.0" width="9" height="10.0" fill="url(#yg)"/>
<rect x="967.9" y="809" width="9" height="1" fill="#0038ff"/>
<rect x="980.2" y="729.4" width="9" height="79.1" fill="url(#rg)"/>
<rect x="980.2" y="805.0" width="9" height="4.0" fill="url(#yg)"/>
<rect x="980.2" y="809" width="9" height="1" fill="#0038ff"/>
<rect x="992.5" y="729.4" width="9" height="79.1" fill="url(#rg)"/>
<rect x="992.5" y="806.0" width="9" height="3.0" fill="url(#yg)"/>
<rect x="992.5" y="809" width="9" height="1" fill="#0038ff"/>
<rect x="1004.8" y="729.4" width="9" height="79.1" fill="url(#rg)"/>
<rect x="1004.8" y="806.0" width="9" height="3.0" fill="url(#yg)"/>
<rect x="1004.8" y="809" width="9" height="1" fill="#0038ff"/>
<rect x="1017.1" y="729.4" width="9" height="79.1" fill="url(#rg)"/>
<rect x="1017.1" y="807.9" width="9" height="1.1" fill="url(#yg)"/>
<rect x="1017.1" y="809" width="9" height="1" fill="#0038ff"/>
<rect x="1029.4" y="729.4" width="9" height="79.1" fill="url(#rg)"/>
<rect x="1029.4" y="807.9" width="9" height="1.1" fill="url(#yg)"/>
<rect x="1029.4" y="809" width="9" height="1" fill="#0038ff"/>
<rect x="1041.7" y="766.4" width="9" height="42.1" fill="url(#rg)"/>
<rect x="1041.7" y="807.9" width="9" height="1.1" fill="url(#yg)"/>
<rect x="1041.7" y="809" width="9" height="1" fill="#0038ff"/>
<rect x="1054.0" y="729.4" width="9" height="79.1" fill="url(#rg)"/>
<rect x="1054.0" y="807.9" width="9" height="1.1" fill="url(#yg)"/>
<rect x="1054.0" y="809" width="9" height="1" fill="#0038ff"/>
<rect x="1066.3" y="760.4" width="9" height="48.1" fill="url(#rg)"/>
<rect x="1066.3" y="807.9" width="9" height="1.1" fill="url(#yg)"/>
<rect x="1066.3" y="809" width="9" height="1" fill="#0038ff"/>
<line x1="1070.8" y1="809" x2="1070.8" y2="813.9" stroke="#54ffff" stroke-width="2"/>
<rect x="1078.6" y="768.4" width="9" height="40.1" fill="url(#rg)"/>
<rect x="1078.6" y="807.9" width="9" height="1.1" fill="url(#yg)"/>
<rect x="1078.6" y="809" width="9" height="1" fill="#0038ff"/>
<line x1="1083.1" y1="809" x2="1083.1" y2="827.0" stroke="#54ffff" stroke-width="2"/>
<rect x="1090.9" y="739.4" width="9" height="69.1" fill="url(#rg)"/>
<rect x="1090.9" y="807.9" width="9" height="1.1" fill="url(#yg)"/>
<rect x="1090.9" y="809" width="9" height="1" fill="#0038ff"/>
<line x1="1095.4" y1="809" x2="1095.4" y2="832.1" stroke="#54ffff" stroke-width="2"/>
<rect x="1103.1" y="739.4" width="9" height="69.1" fill="url(#rg)"/>
<rect x="1103.1" y="806.0" width="9" height="3.0" fill="url(#yg)"/>
<rect x="1103.1" y="809" width="9" height="1" fill="#0038ff"/>
<line x1="1107.6" y1="809" x2="1107.6" y2="836.1" stroke="#54ffff" stroke-width="2"/>
<rect x="1115.4" y="739.4" width="9" height="69.1" fill="url(#rg)"/>
<rect x="1115.4" y="807.9" width="9" height="1.1" fill="url(#yg)"/>
<rect x="1115.4" y="809" width="9" height="1" fill="#0038ff"/>
<line x1="1119.9" y1="809" x2="1119.9" y2="845.2" stroke="#54ffff" stroke-width="2"/>
<rect x="1127.7" y="749.4" width="9" height="59.1" fill="url(#rg)"/>
<rect x="1127.7" y="807.9" width="9" height="1.1" fill="url(#yg)"/>
<rect x="1127.7" y="809" width="9" height="1" fill="#0038ff"/>
<line x1="1132.2" y1="809" x2="1132.2" y2="854.2" stroke="#54ffff" stroke-width="2"/>
<rect x="1140.0" y="775.4" width="9" height="33.1" fill="url(#rg)"/>
<rect x="1140.0" y="807.9" width="9" height="1.1" fill="url(#yg)"/>
<rect x="1140.0" y="809" width="9" height="1" fill="#0038ff"/>
<line x1="1144.5" y1="809" x2="1144.5" y2="859.3" stroke="#54ffff" stroke-width="2"/>
<rect x="1152.3" y="764.4" width="9" height="44.1" fill="url(#rg)"/>
<rect x="1152.3" y="807.9" width="9" height="1.1" fill="url(#yg)"/>
<rect x="1152.3" y="809" width="9" height="1" fill="#0038ff"/>
<line x1="1156.8" y1="809" x2="1156.8" y2="866.0" stroke="#54ffff" stroke-width="2"/>
<rect x="1164.6" y="771.4" width="9" height="37.1" fill="url(#rg)"/>
<rect x="1164.6" y="807.9" width="9" height="1.1" fill="url(#yg)"/>
<rect x="1164.6" y="809" width="9" height="1" fill="#0038ff"/>
<line x1="1169.1" y1="809" x2="1169.1" y2="867.3" stroke="#54ffff" stroke-width="2"/>
<rect x="1176.9" y="776.6" width="9" height="31.9" fill="url(#rg)"/>
<rect x="1176.9" y="807.9" width="9" height="1.1" fill="url(#yg)"/>
<rect x="1176.9" y="809" width="9" height="1" fill="#0038ff"/>
<line x1="1181.4" y1="809" x2="1181.4" y2="872.0" stroke="#54ffff" stroke-width="2"/>
<rect x="1189.2" y="749.4" width="9" height="59.1" fill="url(#rg)"/>
<rect x="1189.2" y="807.9" width="9" height="1.1" fill="url(#yg)"/>
<rect x="1189.2" y="809" width="9" height="1" fill="#0038ff"/>
<line x1="1193.7" y1="809" x2="1193.7" y2="873.3" stroke="#54ffff" stroke-width="2"/>
<rect x="1201.5" y="744.4" width="9" height="64.1" fill="url(#rg)"/>
<rect x="1201.5" y="807.9" width="9" height="1.1" fill="url(#yg)"/>
<rect x="1201.5" y="809" width="9" height="1" fill="#0038ff"/>
<line x1="1206.0" y1="809" x2="1206.0" y2="872.0" stroke="#54ffff" stroke-width="2"/>
<rect x="1213.8" y="732.0" width="9" height="76.5" fill="url(#rg)"/>
<rect x="1213.8" y="807.9" width="9" height="1.1" fill="url(#yg)"/>
<rect x="1213.8" y="809" width="9" height="1" fill="#0038ff"/>
<line x1="1218.3" y1="809" x2="1218.3" y2="875.1" stroke="#54ffff" stroke-width="2"/>
<rect x="1226.1" y="681.3" width="9" height="127.2" fill="url(#rg)"/>
<rect x="1226.1" y="806.0" width="9" height="3.0" fill="url(#yg)"/>
<rect x="1226.1" y="809" width="9" height="1" fill="#0038ff"/>
<line x1="1230.6" y1="809" x2="1230.6" y2="871.1" stroke="#54ffff" stroke-width="2"/>
<rect x="1238.4" y="663.4" width="9" height="145.1" fill="url(#rg)"/>
<rect x="1238.4" y="804.5" width="9" height="4.5" fill="url(#yg)"/>
<rect x="1238.4" y="809" width="9" height="1" fill="#0038ff"/>
<line x1="1242.9" y1="809" x2="1242.9" y2="866.0" stroke="#54ffff" stroke-width="2"/>
<rect x="1250.7" y="753.4" width="9" height="55.1" fill="url(#rg)"/>
<rect x="1250.7" y="807.9" width="9" height="1.1" fill="url(#yg)"/>
<rect x="1250.7" y="809" width="9" height="1" fill="#0038ff"/>
<line x1="1255.2" y1="809" x2="1255.2" y2="860.2" stroke="#54ffff" stroke-width="2"/>
<rect x="1263.0" y="779.4" width="9" height="29.1" fill="url(#rg)"/>
<rect x="1263.0" y="807.9" width="9" height="1.1" fill="url(#yg)"/>
<rect x="1263.0" y="809" width="9" height="1" fill="#0038ff"/>
<line x1="1267.5" y1="809" x2="1267.5" y2="852.0" stroke="#54ffff" stroke-width="2"/>
<rect x="1275.3" y="776.4" width="9" height="32.1" fill="url(#rg)"/>
<rect x="1275.3" y="807.9" width="9" height="1.1" fill="url(#yg)"/>
<rect x="1275.3" y="809" width="9" height="1" fill="#0038ff"/>
<line x1="1279.8" y1="809" x2="1279.8" y2="850.1" stroke="#54ffff" stroke-width="2"/>
<rect x="1287.6" y="771.4" width="9" height="37.1" fill="url(#rg)"/>
<rect x="1287.6" y="807.9" width="9" height="1.1" fill="url(#yg)"/>
<rect x="1287.6" y="809" width="9" height="1" fill="#0038ff"/>
<line x1="1292.1" y1="809" x2="1292.1" y2="853.3" stroke="#54ffff" stroke-width="2"/>
<rect x="1299.9" y="780.4" width="9" height="28.1" fill="url(#rg)"/>
<rect x="1299.9" y="807.9" width="9" height="1.1" fill="url(#yg)"/>
<rect x="1299.9" y="809" width="9" height="1" fill="#0038ff"/>
<line x1="1304.4" y1="809" x2="1304.4" y2="860.2" stroke="#54ffff" stroke-width="2"/>
<rect x="1312.2" y="792.2" width="9" height="16.3" fill="url(#rg)"/>
<rect x="1312.2" y="807.9" width="9" height="1.1" fill="url(#yg)"/>
<rect x="1312.2" y="809" width="9" height="1" fill="#0038ff"/>
<line x1="1316.7" y1="809" x2="1316.7" y2="865.8" stroke="#54ffff" stroke-width="2"/>
<rect x="1324.5" y="788.2" width="9" height="20.3" fill="url(#rg)"/>
<rect x="1324.5" y="807.9" width="9" height="1.1" fill="url(#yg)"/>
<rect x="1324.5" y="809" width="9" height="1" fill="#0038ff"/>
<line x1="1329.0" y1="809" x2="1329.0" y2="874.2" stroke="#54ffff" stroke-width="2"/>
<rect x="1336.8" y="784.4" width="9" height="24.1" fill="url(#rg)"/>
<rect x="1336.8" y="807.9" width="9" height="1.1" fill="url(#yg)"/>
<rect x="1336.8" y="809" width="9" height="1" fill="#0038ff"/>
<line x1="1341.3" y1="809" x2="1341.3" y2="881.9" stroke="#54ffff" stroke-width="2"/>
<rect x="1349.0" y="758.2" width="9" height="50.3" fill="url(#rg)"/>
<rect x="1349.0" y="807.9" width="9" height="1.1" fill="url(#yg)"/>
<rect x="1349.0" y="809" width="9" height="1" fill="#0038ff"/>
<line x1="1353.5" y1="809" x2="1353.5" y2="884.2" stroke="#54ffff" stroke-width="2"/>
<rect x="1361.3" y="766.2" width="9" height="42.3" fill="url(#rg)"/>
<rect x="1361.3" y="807.9" width="9" height="1.1" fill="url(#yg)"/>
<rect x="1361.3" y="809" width="9" height="1" fill="#0038ff"/>
<line x1="1365.8" y1="809" x2="1365.8" y2="886.0" stroke="#54ffff" stroke-width="2"/>
<rect x="1373.6" y="778.1" width="9" height="30.4" fill="url(#rg)"/>
<rect x="1373.6" y="807.9" width="9" height="1.1" fill="url(#yg)"/>
<rect x="1373.6" y="809" width="9" height="1" fill="#0038ff"/>
<line x1="1378.1" y1="809" x2="1378.1" y2="891.1" stroke="#54ffff" stroke-width="2"/>
<rect x="1385.9" y="760.2" width="9" height="48.3" fill="url(#rg)"/>
<rect x="1385.9" y="807.9" width="9" height="1.1" fill="url(#yg)"/>
<rect x="1385.9" y="809" width="9" height="1" fill="#0038ff"/>
<line x1="1390.4" y1="809" x2="1390.4" y2="896.0" stroke="#54ffff" stroke-width="2"/>
<rect x="1398.2" y="722.2" width="9" height="86.3" fill="url(#rg)"/>
<rect x="1398.2" y="807.9" width="9" height="1.1" fill="url(#yg)"/>
<rect x="1398.2" y="809" width="9" height="1" fill="#0038ff"/>
<line x1="1402.7" y1="809" x2="1402.7" y2="894.9" stroke="#54ffff" stroke-width="2"/>
<rect x="1410.5" y="673.2" width="9" height="135.3" fill="url(#rg)"/>
<rect x="1410.5" y="803.7" width="9" height="5.3" fill="url(#yg)"/>
<rect x="1410.5" y="809" width="9" height="1" fill="#0038ff"/>
<line x1="1415.0" y1="809" x2="1415.0" y2="882.7" stroke="#54ffff" stroke-width="2"/>
<rect x="1422.8" y="632.2" width="9" height="176.3" fill="url(#rg)"/>
<rect x="1422.8" y="799.5" width="9" height="9.5" fill="url(#yg)"/>
<rect x="1422.8" y="809" width="9" height="1" fill="#0038ff"/>
<line x1="1427.3" y1="809" x2="1427.3" y2="863.8" stroke="#54ffff" stroke-width="2"/>
<rect x="1435.1" y="598.4" width="9" height="210.1" fill="url(#rg)"/>
<rect x="1435.1" y="791.6" width="9" height="17.4" fill="url(#yg)"/>
<rect x="1435.1" y="809" width="9" height="1" fill="#0038ff"/>
<line x1="1439.6" y1="809" x2="1439.6" y2="838.7" stroke="#54ffff" stroke-width="2"/>
<rect x="1447.4" y="677.4" width="9" height="131.1" fill="url(#rg)"/>
<rect x="1447.4" y="803.7" width="9" height="5.3" fill="url(#yg)"/>
<rect x="1447.4" y="809" width="9" height="1" fill="#0038ff"/>
<line x1="1451.9" y1="809" x2="1451.9" y2="817.9" stroke="#54ffff" stroke-width="2"/>
<rect x="1459.7" y="727.6" width="9" height="80.9" fill="url(#rg)"/>
<rect x="1459.7" y="807.9" width="9" height="1.1" fill="url(#yg)"/>
<rect x="1459.7" y="809" width="9" height="1" fill="#0038ff"/>
<rect x="1472.0" y="700.4" width="9" height="108.1" fill="url(#rg)"/>
<rect x="1472.0" y="805.6" width="9" height="3.4" fill="url(#yg)"/>
<rect x="1472.0" y="809" width="9" height="1" fill="#0038ff"/>
<rect x="1484.3" y="348.4" width="9" height="460.1" fill="url(#rg)"/>
<rect x="1484.3" y="691.6" width="9" height="117.4" fill="url(#yg)"/>
<rect x="1484.3" y="809" width="9" height="1" fill="#0038ff"/>
<rect x="1484.3" y="803.4" width="9" height="6.6" fill="#0060ff"/>
<line x1="1488.8" y1="803.4" x2="1488.8" y2="810" stroke="#40e0ff" stroke-width="1.5"/>
<rect x="1496.6" y="353.4" width="9" height="455.1" fill="url(#rg)"/>
<rect x="1496.6" y="659.0" width="9" height="150.0" fill="url(#yg)"/>
<rect x="1496.6" y="809" width="9" height="1" fill="#0038ff"/>
<rect x="1496.6" y="795.8" width="9" height="14.2" fill="#0060ff"/>
<line x1="1501.1" y1="795.8" x2="1501.1" y2="810" stroke="#40e0ff" stroke-width="1.5"/>
<rect x="1508.9" y="670.4" width="9" height="138.1" fill="url(#rg2)"/>
<rect x="1508.9" y="796.7" width="9" height="12.3" fill="url(#yg)"/>
<rect x="1508.9" y="809" width="9" height="1" fill="#0038ff"/>
<rect x="1521.2" y="734.4" width="9" height="74.1" fill="url(#rg2)"/>
<rect x="1521.2" y="805.6" width="9" height="3.4" fill="url(#yg)"/>
<rect x="1521.2" y="809" width="9" height="1" fill="#0038ff"/>
<line x1="1525.7" y1="641" x2="1525.7" y2="808" stroke="#ff3232" stroke-width="2"/>
<rect x="1533.5" y="739.9" width="9" height="68.6" fill="url(#rg2)"/>
<rect x="1533.5" y="805.6" width="9" height="3.4" fill="url(#yg)"/>
<rect x="1533.5" y="809" width="9" height="1" fill="#0038ff"/>
<line x1="1538.0" y1="633.5" x2="1538.0" y2="808" stroke="#ff3232" stroke-width="2"/>
<rect x="1545.8" y="739.9" width="9" height="68.6" fill="url(#rg2)"/>
<rect x="1545.8" y="805.6" width="9" height="3.4" fill="url(#yg)"/>
<rect x="1545.8" y="809" width="9" height="1" fill="#0038ff"/>
<line x1="1550.3" y1="638" x2="1550.3" y2="808" stroke="#ff3232" stroke-width="2"/>
<line x1="935.5" y1="772" x2="935.5" y2="800.4" stroke="#ff3232" stroke-width="2" opacity="1"/>
<line x1="947.8" y1="755" x2="947.8" y2="808" stroke="#ff3232" stroke-width="2" opacity="1"/>
<line x1="960.1" y1="755" x2="960.1" y2="808" stroke="#ff3232" stroke-width="2" opacity="1"/>
<line x1="1488.8" y1="780" x2="1488.8" y2="802.8" stroke="#ff3232" stroke-width="2" opacity="1"/>
<line x1="1501.1" y1="719" x2="1501.1" y2="795" stroke="#ff3232" stroke-width="2" opacity="1"/>
<line x1="1513.4" y1="668" x2="1513.4" y2="808" stroke="#ff3232" stroke-width="2" opacity="1"/>
<line x1="972.4" y1="755" x2="972.4" y2="808" stroke="#ff3232" stroke-width="2" opacity="0.6"/>
<line x1="984.7" y1="755" x2="984.7" y2="808" stroke="#ff3232" stroke-width="2" opacity="0.6"/>
<line x1="997.0" y1="755" x2="997.0" y2="808" stroke="#ff3232" stroke-width="2" opacity="0.6"/>
<line x1="1009.3" y1="755" x2="1009.3" y2="808" stroke="#ff3232" stroke-width="2" opacity="0.6"/>
<line x1="1021.6" y1="755" x2="1021.6" y2="808" stroke="#ff3232" stroke-width="2" opacity="0.6"/>
<line x1="1033.9" y1="755" x2="1033.9" y2="808" stroke="#ff3232" stroke-width="2" opacity="0.6"/>
<line x1="1046.2" y1="784" x2="1046.2" y2="808" stroke="#ff3232" stroke-width="2" opacity="0.6"/>
<line x1="1058.5" y1="801" x2="1058.5" y2="808" stroke="#ff3232" stroke-width="2" opacity="0.6"/>
<line x1="111.8" y1="801" x2="111.8" y2="808" stroke="#ff3232" stroke-width="2" opacity="0.6"/>
<line x1="124.0" y1="796.7" x2="124.0" y2="808" stroke="#ff3232" stroke-width="2" opacity="0.6"/>
<line x1="136.3" y1="795.8" x2="136.3" y2="808" stroke="#ff3232" stroke-width="2" opacity="0.6"/>
<line x1="148.6" y1="797.6" x2="148.6" y2="808" stroke="#ff3232" stroke-width="2" opacity="0.6"/>
<line x1="160.9" y1="801" x2="160.9" y2="808" stroke="#ff3232" stroke-width="2" opacity="0.6"/>
<line x1="173.2" y1="802" x2="173.2" y2="808" stroke="#ff3232" stroke-width="2" opacity="0.6"/>
<line x1="185.5" y1="805" x2="185.5" y2="808" stroke="#ff3232" stroke-width="2" opacity="0.6"/>
<polyline fill="none" stroke="#ffffff" stroke-width="2" stroke-linejoin="round" points="0.0,758.6 17.2,758.6 27.2,755.9 38.5,755.0 49.0,758.2 62.6,763.7 75.3,765.9 99.8,766.2 112.5,770.4 125.2,773.1 148.8,773.1 161.5,771.3 179.7,770.4 199.6,768.6 210.5,765.9 222.5,762.2 235.2,759.5 247.2,764.6 280.0,764.9 296.3,764.4 309.0,761.9 321.7,760.0 344.4,758.6 358.0,754.6 370.7,753.1 387.1,753.1 407.0,748.6 419.7,746.8 436.1,746.8 447.9,744.1 460.0,741.0"/>
<polyline fill="none" stroke="#ffffff" stroke-width="2" stroke-linejoin="round" points="840.0,748.0 849.1,752.6 867.2,755.3 898.1,755.3 912.6,752.8 927.1,764.0 941.6,771.3 958.0,777.1 970.7,779.1 983.4,778.6 997.9,775.8 1012.4,771.3 1026.9,764.0 1045.1,752.6 1052.0,748.0"/>
<polyline fill="none" stroke="#ffffff" stroke-width="2" stroke-linejoin="round" points="1205.0,703.0 1217.4,705.9 1241.9,710.8 1267.6,720.6 1290.9,719.8 1315.4,712.0 1342.4,699.7 1366.9,698.5 1390.2,691.2 1402.4,693.1 1415.4,701.0 1427.7,712.0 1439.7,723.0 1452.2,732.8 1464.5,740.2 1476.5,742.6 1488.7,751.2 1501.0,759.8 1513.3,767.2 1525.5,771.3 1538.0,773.8 1549.5,773.8"/>
<polyline fill="none" stroke="#0000ff" stroke-width="2.2" stroke-linejoin="round" points="0.0,771.3 13.6,772.6 26.5,775.8 41.7,775.8 52.6,772.2 63.5,768.0 75.3,766.8 99.8,766.8 112.5,762.2 127.0,759.9 136.1,759.9 149.2,761.3 161.5,763.1 173.3,764.4 185.5,766.8 198.2,768.0 210.5,768.6 222.5,772.2 230.5,773.7 235.9,773.7 247.2,769.1 259.2,768.0 271.3,768.0 280.0,768.9 296.3,769.8 309.0,772.6 321.7,774.9 344.4,775.8 358.0,778.9 381.6,778.9 394.3,781.6 407.0,782.7 419.7,783.6 432.5,784.9 445.2,785.8 457.0,787.1 463.3,788.0 479.6,788.0 497.8,786.7 506.0,784.9 530.5,784.4 534.1,783.6 564.9,783.6 566.4,784.4 579.1,785.5 591.2,786.7 603.2,788.0 616.3,788.9 640.2,789.4 665.3,790.7 701.6,790.7 703.4,789.4 763.3,789.4 765.1,788.5 788.1,788.5 800.1,786.7 812.3,783.1 825.0,781.6 840.0,781.0 847.3,779.1 861.8,778.2 874.5,776.7 898.1,777.1 903.5,778.6 912.6,778.6 919.9,767.7 928.0,752.6 932.0,745.0"/>
<polyline fill="none" stroke="#0000ff" stroke-width="2.2" stroke-linejoin="round" points="1100.0,749.0 1106.8,752.6 1120.0,756.2 1132.7,759.5 1144.5,762.2 1157.2,765.5 1174.4,767.7 1192.6,768.6 1207.1,769.8 1228.9,769.8 1243.4,767.3 1255.2,765.5 1267.0,761.3 1279.7,761.3 1292.4,762.2 1304.2,765.5 1316.0,767.3 1328.7,770.4 1341.4,772.6 1354.1,773.7 1366.8,774.6 1379.5,774.9 1390.4,777.6 1402.4,777.7 1415.4,774.5 1427.7,765.9 1439.7,752.4 1452.2,741.4 1464.5,737.7 1476.5,737.7 1488.7,721.8 1494.4,702.2 1501.0,675.2 1513.3,626.2 1525.5,604.1 1538.0,598.7 1550.3,603.1"/>
<path d="M1566.5 16 L1572 21.7 L1566.5 27.4 L1561 21.7 Z" fill="none" stroke="#707070" stroke-width="1"/>
<rect x="1579.6" y="16.5" width="10.8" height="9.8" rx="2" fill="none" stroke="#808080" stroke-width="1.2"/><rect x="1586" y="17.5" width="3" height="7" fill="#808080"/>
<circle cx="92.5" cy="20.8" r="6" fill="#7a7a7a"/><path d="M89 19.3 L92.5 22.8 L96 19.3" fill="none" stroke="#111" stroke-width="1.6"/>
<path d="M50.5 229.5 L62 229.5 M50.5 229.5 L54 227 M50.5 229.5 L54 232.5" stroke="#c8c8c8" stroke-width="1.2" fill="none"/>
<path d="M1502 32.5 L1512 36.5 M1502 32.5 L1504.5 36 M1502 32.5 L1506.5 32" stroke="#c0c0c0" stroke-width="1" fill="none"/>
<path d="M0 898 L0 888 Q1 897 10 898 Z" fill="#fff"/><path d="M1603 898 L1603 888 Q1602 897 1593 898 Z" fill="#fff"/><path d="M0 0 L0 8 Q1 1 8 0 Z" fill="#fff"/>
</svg>
<div class="t " style="left:-16px;top:-6px;color:#c8c8c8">分时</div>
<div class="t " style="left:20.6px;top:-6px;color:#c8c8c8">1分钟</div>
<div class="t " style="left:59.7px;top:-6px;color:#c8c8c8">5分钟</div>
<div class="t " style="left:98.8px;top:-6px;color:#c8c8c8">15分钟</div>
<div class="t " style="left:145px;top:-6px;color:#c8c8c8">30分钟</div>
<div class="t " style="left:190.4px;top:-6px;color:#c8c8c8">60分钟</div>
<div class="t " style="left:237.7px;top:-6px;color:#54ffff">日线</div>
<div class="t " style="left:270.7px;top:-6px;color:#c8c8c8">周线</div>
<div class="t " style="left:304.6px;top:-6px;color:#c8c8c8">月线</div>
<div class="t " style="left:338.5px;top:-6px;color:#c8c8c8">10分钟</div>
<div class="t " style="left:385px;top:-6px;color:#c8c8c8">45日线</div>
<div class="t " style="left:431px;top:-6px;color:#c8c8c8">季线</div>
<div class="t " style="left:465px;top:-6px;color:#c8c8c8">年线</div>
<div class="t " style="left:502px;top:-6px;color:#c8c8c8">5秒</div>
<div class="t " style="left:533px;top:-6px;color:#c8c8c8">15秒</div>
<div class="t " style="left:566px;top:-6px;color:#c8c8c8">多周期</div>
<div class="t " style="left:610px;top:-6px;color:#c8c8c8">更多</div>
<div class="t " style="left:637px;top:-6px;color:#c8c8c8">&gt;</div>
<div class="t ct" style="left:1335.7px;top:-6px;">复权</div>
<div class="t ct" style="left:1370.54px;top:-6px;">叠加</div>
<div class="t ct" style="left:1405.38px;top:-6px;">多股</div>
<div class="t ct" style="left:1440.22px;top:-6px;">统计</div>
<div class="t ct" style="left:1475.06px;top:-6px;">画线</div>
<div class="t ct" style="left:1512.9px;top:-6px;">F10</div>
<div class="t ct" style="left:1544.74px;top:-6px;">标记</div>
<div class="t ct" style="left:1576.5800000000002px;top:-6px;">+自选</div>
<div class="t " style="left:-2.4px;top:14px;color:#ff0000">工</div>
<div class="t ct" style="left:11px;top:14px;">(日线.前复权)</div>
<div class="t ct" style="left:105px;top:205px;">3.29 - 3.30</div>
<div class="t ct" style="left:63.5px;top:223px;">3.09</div>
<div class="t ct" style="left:1515px;top:30px;">4.58</div>
<div class="t ct" style="left:1507.5px;top:70px;">4.18 - 4.12</div>
<div class="b" style="left:1248px;top:231px;width:13px;height:13px;background:#004080;color:#fff;font-size:11px;line-height:13px;text-align:center;overflow:hidden;">财</div>
<div class="b" style="left:1481px;top:231px;width:13px;height:13px;background:#800000;color:#fff;font-size:11px;line-height:13px;text-align:center;overflow:hidden;">张</div>
<div class="t ct" style="left:1px;top:247px;">化指标创</div>
<div class="t " style="left:54.5px;top:247px;color:#ff0000">HL10: 9.89</div>
<div class="t " style="left:119.8px;top:247px;color:#ffff00">HL20: 0.41</div>
<div class="t " style="left:184.4px;top:247px;color:#ff00ff">HL30: 0.01</div>
<div class="t " style="left:249.8px;top:247px;color:#00ff00">廿斜率: -0.05</div>
<div class="t ct" style="left:324px;top:247px;">十换手: 62.52</div>
<div class="t " style="left:402.3px;top:247px;color:#0000ff">锁定筹码: 3.21</div>
<div class="b" style="left:448px;top:74px;width:769.0px;height:679.0px;background:#f0f0f0;border-right:1px solid #fafafa;border-bottom:1px solid #fafafa;"></div>
<div class="b" style="left:448px;top:74px;width:769.0px;height:21.6px;background:#b32d33;"></div>
<div class="t " style="left:453px;top:78px;color:#fff">指标公式编辑器</div>
<svg style="position:absolute;left:1179px;top:76px" width="36" height="16"><rect x="3.5" y="3.5" width="9" height="9" fill="none" stroke="#f3d9da" stroke-width="1"/><path d="M23.5 3.5 L32.5 12.5 M32.5 3.5 L23.5 12.5" stroke="#f3d9da" stroke-width="1"/></svg>
<div class="t " style="left:451px;top:104px;">公式名称</div>
<div class="inp" style="left:508px;top:99px;width:95.0px;height:22.0px;"></div>
<div class="t " style="left:512px;top:104px;">程序化指标创</div>
<div class="cb" style="left:617px;top:104px;width:13.0px;height:13.0px;"></div>
<div class="t " style="left:635px;top:104px;">密码保护</div>
<div class="inp" style="left:691px;top:99px;width:105.0px;height:22.0px;background:#f0f0f0;border-color:#a0a0a0;"></div>
<div class="t " style="left:451px;top:128px;">公式描述</div>
<div class="inp" style="left:508px;top:123px;width:218.0px;height:22.5px;"></div>
<div class="t " style="left:512px;top:128px;">公众号：程序化指标</div>
<div class="t " style="left:730px;top:128px;">版本</div>
<div class="inp" style="left:761px;top:123px;width:35.0px;height:22.5px;"></div>
<div class="t " style="left:765px;top:128px;">0</div>
<div class="b" style="left:450px;top:173.5px;width:341.5px;height:119.0px;border:1px solid #fff;border-right:1px solid #696969;border-bottom:1px solid #696969;box-shadow:inset -1px -1px 0 #a0a0a0;"></div>
<div class="b" style="left:507px;top:152px;width:53.5px;height:21.5px;background:#f0f0f0;border-left:1px solid #fff;border-top:1px solid #fff;border-right:1px solid #696969;box-shadow:inset -1px 0 0 #a0a0a0;border-radius:2px 2px 0 0;"></div>
<div class="bt" style="left:507px;top:155px;width:52.5px;">参数5-8</div>
<div class="b" style="left:560.5px;top:152px;width:62.5px;height:21.5px;background:#f0f0f0;border-left:1px solid #fff;border-top:1px solid #fff;border-right:1px solid #696969;box-shadow:inset -1px 0 0 #a0a0a0;border-radius:2px 2px 0 0;"></div>
<div class="bt" style="left:560.5px;top:155px;width:61.5px;">参数9-12</div>
<div class="b" style="left:623px;top:152px;width:69.0px;height:21.5px;background:#f0f0f0;border-left:1px solid #fff;border-top:1px solid #fff;border-right:1px solid #696969;box-shadow:inset -1px 0 0 #a0a0a0;border-radius:2px 2px 0 0;"></div>
<div class="bt" style="left:623px;top:155px;width:68.0px;">参数13-16</div>
<div class="b" style="left:450px;top:150px;width:58.0px;height:25.5px;background:#f0f0f0;border-left:1px solid #fff;border-top:1px solid #fff;border-right:1px solid #696969;box-shadow:inset -1px 0 0 #a0a0a0;border-radius:2px 2px 0 0;"></div>
<div class="bt" style="left:450px;top:153px;width:57.0px;">参数1-4</div>
<div class="t " style="left:469.6px;top:175px;">参数</div>
<div class="t " style="left:542px;top:175px;">最小</div>
<div class="t " style="left:605px;top:175px;">最大</div>
<div class="t " style="left:670px;top:175px;">缺省</div>
<div class="t " style="left:456.5px;top:193px;">1</div>
<div class="inp" style="left:466.3px;top:191px;width:67.4px;height:22.5px;"></div>
<div class="inp" style="left:541px;top:191px;width:56.0px;height:22.5px;"></div>
<div class="inp" style="left:604px;top:191px;width:55.7px;height:22.5px;"></div>
<div class="inp" style="left:667px;top:191px;width:55.8px;height:22.5px;"></div>
<div class="t " style="left:456.5px;top:217px;">2</div>
<div class="inp" style="left:466.3px;top:215.2px;width:67.4px;height:22.3px;"></div>
<div class="inp" style="left:541px;top:215.2px;width:56.0px;height:22.3px;"></div>
<div class="inp" style="left:604px;top:215.2px;width:55.7px;height:22.3px;"></div>
<div class="inp" style="left:667px;top:215.2px;width:55.8px;height:22.3px;"></div>
<div class="t " style="left:456.5px;top:241px;">3</div>
<div class="inp" style="left:466.3px;top:239.2px;width:67.4px;height:22.3px;"></div>
<div class="inp" style="left:541px;top:239.2px;width:56.0px;height:22.3px;"></div>
<div class="inp" style="left:604px;top:239.2px;width:55.7px;height:22.3px;"></div>
<div class="inp" style="left:667px;top:239.2px;width:55.8px;height:22.3px;"></div>
<div class="t " style="left:456.5px;top:265px;">4</div>
<div class="inp" style="left:466.3px;top:263.2px;width:67.4px;height:22.5px;"></div>
<div class="inp" style="left:541px;top:263.2px;width:56.0px;height:22.5px;"></div>
<div class="inp" style="left:604px;top:263.2px;width:55.7px;height:22.5px;"></div>
<div class="inp" style="left:667px;top:263.2px;width:55.8px;height:22.5px;"></div>
<div class="t " style="left:802px;top:106px;">公式类型</div>
<div class="combo" style="left:860px;top:101px;width:111.0px;height:24.6px;"><i style="left:91.4px"></i><b style="left:96.7px;top:9.3px"></b></div>
<div class="t " style="left:864px;top:107px;">其他类型</div>
<div class="t " style="left:979px;top:105px;">画线方法</div>
<div class="combo" style="left:1037px;top:99.3px;width:107.0px;height:24.4px;"><i style="left:87.3px"></i><b style="left:92.7px;top:9.2px"></b></div>
<div class="t " style="left:1041px;top:104px;">副图</div>
<div class="btn" style="left:1151px;top:101px;width:62.0px;height:20.8px;"></div>
<div class="bt" style="left:1151px;top:105px;width:62.0px;word-spacing:5px;">确 定</div>
<div class="cb" style="left:805.3px;top:133px;width:13.0px;height:13.0px;"></div>
<div class="t " style="left:822.7px;top:133px;">公式只用于PC</div>
<div class="cb" style="left:911px;top:133px;width:13.0px;height:13.0px;"></div>
<div class="t " style="left:929px;top:133px;">云公式</div>
<div class="t " style="left:979px;top:130px;">显示小数</div>
<div class="combo" style="left:1037px;top:128px;width:107.0px;height:24.4px;"><i style="left:87.3px"></i><b style="left:92.7px;top:9.2px"></b></div>
<div class="t " style="left:1041px;top:134px;">缺省位数</div>
<div class="btn" style="left:1151px;top:126.5px;width:62.0px;height:20.3px;"></div>
<div class="bt" style="left:1151px;top:130px;width:62.0px;word-spacing:5px;">取 消</div>
<div class="btn" style="left:1151px;top:153px;width:62.0px;height:20.6px;"></div>
<div class="bt" style="left:1151px;top:157px;width:62.0px;">另存为</div>
<div class="t " style="left:804.3px;top:161px;">公式标签</div>
<div class="t " style="left:889px;top:161px;">交易法则</div>
<div class="t " style="left:952.8px;top:161px;">坐标线位置,最多6个,用分号分隔</div>
<div class="combo" style="left:805.3px;top:182.2px;width:76.5px;height:24.4px;"><i style="left:57.3px"></i><b style="left:62.4px;top:9.2px"></b></div>
<div class="t " style="left:809.3px;top:188px;">金叉死叉</div>
<div class="combo" style="left:889px;top:182.2px;width:56.6px;height:24.4px;"><i style="left:37.3px"></i><b style="left:42.5px;top:9.2px"></b></div>
<div class="t " style="left:893px;top:188px;">左侧</div>
<div class="inp" style="left:952.8px;top:180.5px;width:260.2px;height:22.0px;"></div>
<div class="t " style="left:957.8px;top:185px;">自动</div>
<div class="b" style="left:883.2px;top:218.8px;width:328.6px;height:40.7px;border:1px solid #a0a0a0;box-shadow:inset 1px 1px 0 #fff, 1px 1px 0 #fff;"></div>
<div class="t " style="left:889.3px;top:212px;background:#f0f0f0;padding:0 3px;">额外Y轴分界</div>
<div class="t " style="left:892.3px;top:237px;">值1</div>
<div class="inp" style="left:916.2px;top:231.4px;width:46.8px;height:22.3px;"></div>
<div class="t " style="left:974.3px;top:237px;">值2</div>
<div class="inp" style="left:997.2px;top:231.4px;width:46.7px;height:22.3px;"></div>
<div class="t " style="left:1055.3px;top:237px;">值3</div>
<div class="inp" style="left:1078.2px;top:231.4px;width:46.8px;height:22.3px;"></div>
<div class="t " style="left:1135.2px;top:237px;">值4</div>
<div class="inp" style="left:1159px;top:231.4px;width:47.0px;height:22.3px;"></div>
<div class="btn" style="left:805.3px;top:266px;width:61.5px;height:22.9px;"></div>
<div class="bt" style="left:805.3px;top:270px;width:61.5px;">AI写公式</div>
<div class="btn" style="left:881px;top:266px;width:61.9px;height:22.9px;"></div>
<div class="bt" style="left:881px;top:270px;width:61.9px;">编辑操作</div>
<div class="btn" style="left:947px;top:266px;width:62.0px;height:22.9px;"></div>
<div class="bt" style="left:947px;top:270px;width:62.0px;">插入函数</div>
<div class="btn" style="left:1013px;top:266px;width:62.0px;height:22.9px;"></div>
<div class="bt" style="left:1013px;top:270px;width:62.0px;">插入资源</div>
<div class="btn" style="left:1082px;top:266px;width:62.0px;height:22.9px;"></div>
<div class="bt" style="left:1082px;top:270px;width:62.0px;color:#a0a0a0;">引入公式</div>
<div class="btn" style="left:1150px;top:266px;width:62.0px;height:22.9px;"></div>
<div class="bt" style="left:1150px;top:270px;width:62.0px;">测试公式</div>
<div class="b" style="left:448px;top:296px;width:767.0px;height:338.0px;border:1px solid #a0a0a0;border-left:2px solid #a6a6a6;background:#f0f0f0;box-shadow:inset 1px 1px 0 #fff;"></div>
<div class="b" style="left:450px;top:301px;width:750.0px;height:312.0px;background:#fff;"></div>
<div class="b" style="left:1200px;top:413px;width:14.0px;height:181.5px;background:#cdcdcd;"></div>
<svg style="position:absolute;left:1200px;top:297px" width="14" height="337"><path d="M3.5 16.5 L7.2 12.5 L11 16.5" fill="none" stroke="#505050" stroke-width="1.8"/><path d="M3.5 304.5 L7.3 308.5 L11 304.5" fill="none" stroke="#505050" stroke-width="1.8"/></svg>
<svg style="position:absolute;left:450px;top:613px" width="750" height="20"><path d="M11.5 4 L7.5 7.5 L11.5 11" fill="none" stroke="#bdbdbd" stroke-width="1.6"/><path d="M738.5 4 L742.5 7.5 L738.5 11" fill="none" stroke="#bdbdbd" stroke-width="1.6"/></svg>
<div class="code">
<div><span>STICKLINE(((C/1.2)*100),HL20,0,1.7,0)COLOR00BBBB;</span></div>
<div><span>STICKLINE(((C/1.2)*100),HL20,0,0.7,0)COLOR00DDDD;</span></div>
<div><span>STICKLINE(((C/1.2)*100),HL20,0,0.2,0)COLOR00FFFF;</span></div>
<div><span>HL30:WINNER(C/1.3)*100,STICK,COLORFF00FF;</span></div>
<div><span>STICKLINE(((C/1.3)*100),HL30,0,2.7,0),COLORFF1100;</span></div>
<div><span>STICKLINE(((C/1.3)*100),HL30,0,1.7,0),COLORFF5500;</span></div>
<div><span>STICKLINE(((C/1.3)*100),HL30,0,0.7,0),COLORFF9900;</span></div>
<div><span>STICKLINE(((C/1.3)*100),HL30,0,0.2,0),COLORFFDD00;</span></div>
<div><span>BB:=100,POINTDOT,LINETHICK2,COLORRED;</span></div>
<div><span>AA:=15,COLORYELLOW;</span></div>
<div><span>DD:=70,COLORYELLOW;</span></div>
<div><span>CC:=300,POINTDOT,LINETHICK2,COLORGREEN;</span></div>
<div><span>X4:=EMA(C,20);</span></div>
<div><span><u>廿</u><u>斜</u><u>率</u>:(X4-REF(X4,1))/REF(X4,1)*100,LINETHICK0;</span></div>
<div><span><u>十</u><u>换</u><u>手</u>:SUM(VOL,10)/CAPITAL*100,LINETHICK0;</span></div>
<div><span><u>锁</u><u>定</u><u>筹</u><u>码</u>:EMA((HSL-ZXL)/ZXL*XS,13),LINETHICK2;</span></div>
<div><span><u>浮</u><u>动</u><u>筹</u><u>码</u>:EMA((ZDL-HSL)/HSL*XS,13),LINETHICK2;</span></div>
<div><span><u>力</u><u>量</u><u>对</u><u>比</u>:<u>锁</u><u>定</u><u>筹</u><u>码</u>-<u>浮</u><u>动</u><u>筹</u><u>码</u>,COLORSTICK;</span></div>
</div>
<div class="b" style="left:448px;top:635px;width:708.5px;height:118.0px;border:1px solid #a0a0a0;border-top:2px solid #a0a0a0;border-left:2px solid #a6a6a6;border-bottom:2px solid #a6a6a6;background:#fff;"></div>
<div class="b" style="left:1137px;top:637px;width:18.5px;height:114.0px;background:#f5f4f2;"></div>
<div class="t " style="left:454px;top:639px;">测试通过! 代码长度:1188,输出线个数:20</div>
<div class="btn" style="left:1159.5px;top:635.5px;width:54.2px;height:24.0px;background:#f0f0f0;border-color:#fff #696969 #696969 #fff;box-shadow:inset -1px -1px 0 #a0a0a0;"></div>
<div class="bt" style="left:1159.5px;top:640px;width:54.2px;">动态翻译</div>
<div class="btn" style="left:1159.5px;top:663.2px;width:54.2px;height:24.0px;background:#f8f8f8;border-color:#696969 #fff #fff #696969;box-shadow:inset 1px 1px 0 #a0a0a0;"></div>
<div class="bt" style="left:1159.5px;top:669px;width:54.2px;">测试结果</div>
<div class="btn" style="left:1159.5px;top:691.5px;width:54.2px;height:24.0px;background:#f0f0f0;border-color:#fff #696969 #696969 #fff;box-shadow:inset -1px -1px 0 #a0a0a0;"></div>
<div class="bt" style="left:1159.5px;top:696px;width:54.2px;">参数精灵</div>
<div class="btn" style="left:1159.5px;top:719.7px;width:54.2px;height:23.8px;background:#f0f0f0;border-color:#fff #696969 #696969 #fff;box-shadow:inset -1px -1px 0 #a0a0a0;"></div>
<div class="bt" style="left:1159.5px;top:724px;width:54.2px;">用法注释</div>
</body></html>
